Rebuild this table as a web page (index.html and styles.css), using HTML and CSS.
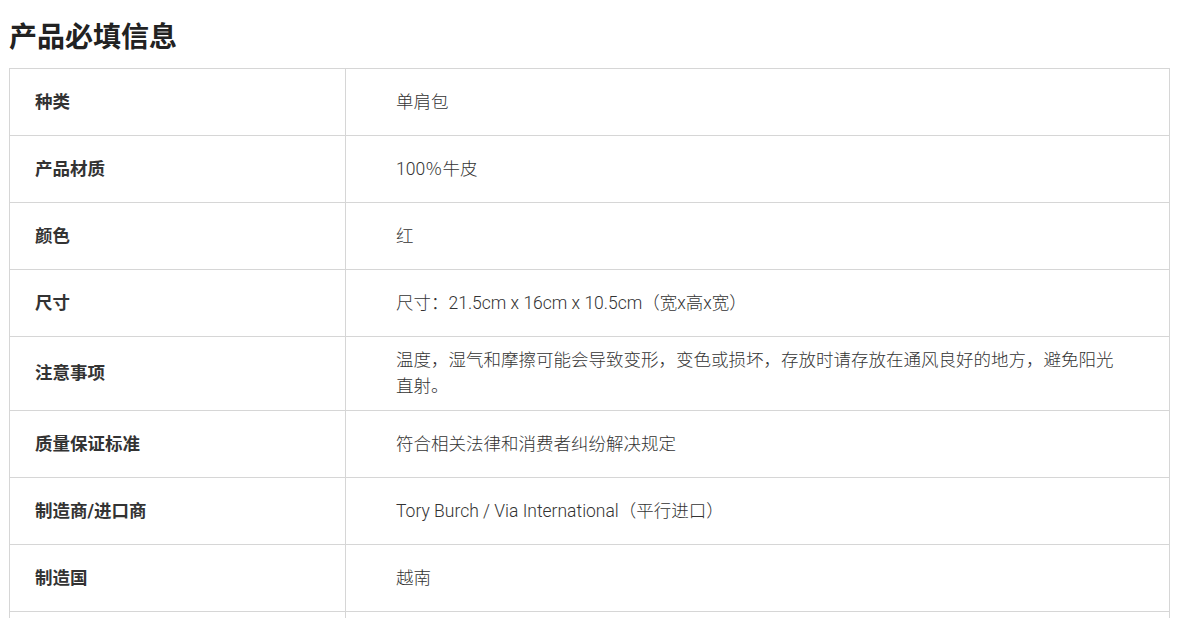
FILE: index.html
```html
<!DOCTYPE html>
<html lang="zh-CN">
<head>
<meta charset="utf-8">
<title>产品必填信息</title>
<link rel="stylesheet" href="styles.css">
</head>
<body>
<div class="page">
  <h1 class="title">产品必填信息</h1>
  <div class="spec">
    <div class="row"><div class="label">种类</div><div class="value">单肩包</div></div>
    <div class="row"><div class="label">产品材质</div><div class="value">100％牛皮</div></div>
    <div class="row"><div class="label">颜色</div><div class="value">红</div></div>
    <div class="row"><div class="label">尺寸</div><div class="value">尺寸：21.5cm x 16cm x 10.5cm（宽x高x宽）</div></div>
    <div class="row"><div class="label">注意事项</div><div class="value">温度，湿气和摩擦可能会导致变形，变色或损坏，存放时请存放在通风良好的地方，避免阳光直射。</div></div>
    <div class="row"><div class="label">质量保证标准</div><div class="value">符合相关法律和消费者纠纷解决规定</div></div>
    <div class="row"><div class="label">制造商/进口商</div><div class="value">Tory Burch / Via International（平行进口）</div></div>
    <div class="row"><div class="label">制造国</div><div class="value">越南</div></div>
    <div class="row"><div class="label"></div><div class="value"></div></div>
  </div>
</div>
</body>
</html>
```

FILE: styles.css
```css
* { box-sizing: border-box; }
html, body { margin: 0; padding: 0; background: #fff; }
body {
  font-family: Roboto, "Noto Sans CJK SC", "Noto Sans", sans-serif;
  color: #333;
}
.page {
  padding: 18px 13px 0 9px;
}
.title {
  margin: 0 0 10px;
  font-size: 28px;
  line-height: 40px;
  font-weight: 700;
  color: #222;
}
.spec {
  border: 1px solid #d6d6d6;
  border-bottom: none;
}
.row {
  display: grid;
  grid-template-columns: 336px 1fr;
  border-bottom: 1px solid #d6d6d6;
}
.label, .value {
  min-height: 66px;
  display: flex;
  align-items: center;
  font-size: 17.5px;
  line-height: 26px;
}
.label {
  padding: 10px 25px 11px;
  font-weight: 700;
  color: #333;
  border-right: 1px solid #d6d6d6;
}
.value {
  padding: 10px 50px 11px 50px;
  font-weight: 300;
  color: #333;
}
```
